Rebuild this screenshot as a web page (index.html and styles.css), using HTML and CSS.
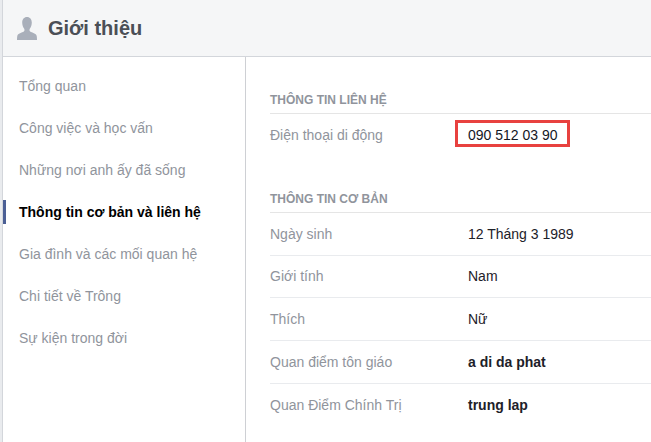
FILE: index.html
```html
<!DOCTYPE html>
<html lang="vi">
<head>
<meta charset="utf-8">
<title>Giới thiệu</title>
<link rel="stylesheet" href="styles.css">
</head>
<body>
<div class="page">
  <header class="head">
    <svg class="head-icon" width="20" height="24" viewBox="0 0 20 24" aria-hidden="true">
      <path fill="#a9afba" d="M10 0c3 0 4.800 2.300 4.800 5.600 0 2.400-.8 4.600-2 6.200-.5.700-.4 2.300.4 2.800 1.800 1 6 2 6.500 4.400.2 1 .3 2.500.3 4H0c0-1.500.1-3 .3-4 .5-2.400 4.700-3.400 6.500-4.400.8-.5.900-2.100.4-2.800-1.200-1.600-2-3.800-2-6.200C5.200 2.300 7 0 10 0z"/>
    </svg>
    <h1 class="head-title">Giới thiệu</h1>
  </header>
  <div class="body">
    <nav class="side">
      <a class="side-item">Tổng quan</a>
      <a class="side-item">Công việc và học vấn</a>
      <a class="side-item">Những nơi anh ấy đã sống</a>
      <a class="side-item active">Thông tin cơ bản và liên hệ</a>
      <a class="side-item">Gia đình và các mối quan hệ</a>
      <a class="side-item">Chi tiết về Trông</a>
      <a class="side-item">Sự kiện trong đời</a>
    </nav>
    <main class="main">
      <section class="sec">
        <h2 class="sec-title">THÔNG TIN LIÊN HỆ</h2>
        <div class="row first">
          <div class="label">Điện thoại di động</div>
          <div class="value"><span class="phone">090 512 03 90</span></div>
        </div>
      </section>
      <section class="sec second">
        <h2 class="sec-title">THÔNG TIN CƠ BẢN</h2>
        <div class="row"><div class="label">Ngày sinh</div><div class="value">12 Tháng 3 1989</div></div>
        <div class="row short"><div class="label">Giới tính</div><div class="value">Nam</div></div>
        <div class="row"><div class="label">Thích</div><div class="value">Nữ</div></div>
        <div class="row"><div class="label">Quan điểm tôn giáo</div><div class="value bold">a di da phat</div></div>
        <div class="row last"><div class="label">Quan Điểm Chính Trị</div><div class="value bold">trung lap</div></div>
      </section>
    </main>
  </div>
</div>
</body>
</html>
```
FILE: styles.css
```css
html, body {
  margin: 0;
  padding: 0;
  background: #e9ebee;
}
body {
  width: 651px;
  height: 442px;
  overflow: hidden;
  font-family: "Liberation Sans", Arial, sans-serif;
  font-size: 14px;
  color: #1d2129;
}
.page {
  height: 442px;
  margin-left: 2px;
  background: #fff;
  border-left: 1px solid #d3d6db;
  box-sizing: border-box;
  display: flex;
  flex-direction: column;
}
.head {
  height: 57px;
  box-sizing: border-box;
  background: #f5f6f7;
  border-bottom: 1px solid #d3d6db;
  display: flex;
  align-items: center;
  padding-left: 14px;
  gap: 11px;
}
.head-icon { flex: none; margin-top: 1px; }
.head-title {
  margin: 0 0 1px;
  font-size: 20px;
  font-weight: bold;
  color: #4b4f56;
  line-height: 24px;
}
.body {
  flex: 1;
  display: flex;
}
.side {
  width: 243px;
  box-sizing: border-box;
  border-right: 1px solid #ced0d4;
  padding-top: 8px;
  flex: none;
}
.side-item {
  display: block;
  height: 42px;
  line-height: 42px;
  padding-left: 16px;
  color: #90949c;
  white-space: nowrap;
}
.side-item.active {
  position: relative;
  color: #000;
  font-weight: bold;
}
.side-item.active::before {
  content: "";
  position: absolute;
  left: 0;
  top: 9px;
  width: 3px;
  height: 24px;
  background: #4b5f95;
}
.main {
  flex: 1;
  padding-left: 24px;
  padding-top: 35px;
}
.sec-title {
  margin: 0;
  height: 22px;
  line-height: 17px;
  font-size: 12px;
  font-weight: bold;
  color: #90949c;
  box-sizing: border-box;
  border-bottom: 1px solid #e5e5e5;
}
.sec.second { margin-top: 35px; }
.row {
  display: flex;
  height: 43px;
  box-sizing: border-box;
  align-items: center;
  border-bottom: 1px solid #e9ebee;
}
.row.short {
  height: 42px;
  padding-bottom: 1px;
}
.row.last {
  height: 42px;
  border-bottom: 0;
}
.row.first {
  height: 42px;
  border-bottom: 0;
}
.label {
  width: 198px;
  flex: none;
  color: #90949c;
}
.value { color: #1d2129; }
.value.bold { font-weight: bold; }
.phone {
  position: relative;
  color: #14171f;
}
.phone::after {
  content: "";
  position: absolute;
  left: -13px;
  right: -12px;
  top: -7px;
  bottom: -4px;
  border: 3px solid #e8413f;
}
```
